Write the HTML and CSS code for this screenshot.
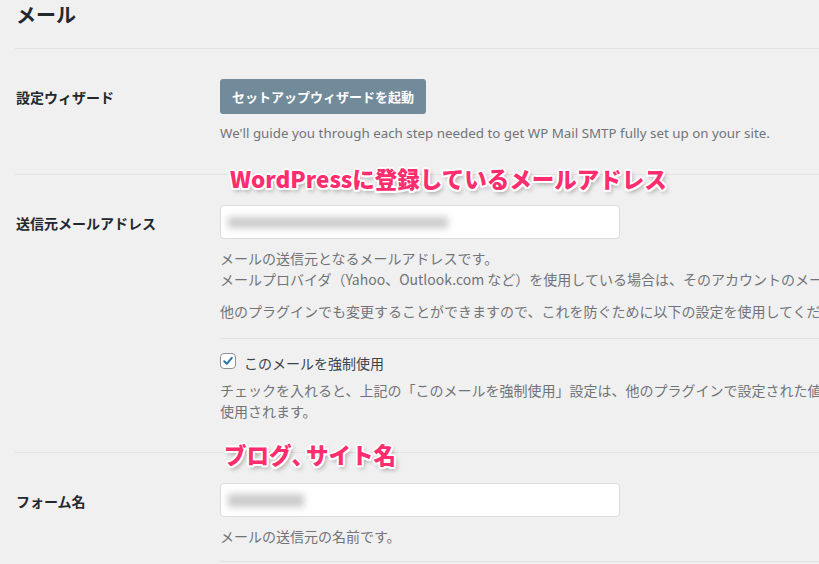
FILE: index.html
```html
<!DOCTYPE html>
<html lang="ja">
<head>
<meta charset="utf-8">
<title>メール</title>
<link rel="stylesheet" href="styles.css">
</head>
<body>
<div class="page">
  <h1 class="title">メール</h1>

  <div class="row">
    <div class="label">設定ウィザード</div>
    <div class="field">
      <button class="btn">セットアップウィザードを起動</button>
      <p class="desc en">We'll guide you through each step needed to get WP Mail SMTP fully set up on your site.</p>
    </div>
  </div>

  <div class="row">
    <div class="label">送信元メールアドレス</div>
    <div class="field">
      <div class="input"><span class="blur blur-email"></span></div>
      <p class="desc first">メールの送信元となるメールアドレスです。<br>メールプロバイダ（Yahoo、Outlook.com など）を使用している場合は、そのアカウントのメールアドレスにする必要があります。</p>
      <p class="desc second">他のプラグインでも変更することができますので、これを防ぐために以下の設定を使用してください。</p>
      <div class="sub">
        <label class="check">
          <span class="box"><svg viewBox="0 0 16 16" width="16" height="16"><path d="M3.6 8.2 L6.6 11.2 L12.4 4.4" fill="none" stroke="#2271b1" stroke-width="2.2" stroke-linecap="round" stroke-linejoin="round"/></svg></span>
          <span class="check-text">このメールを強制使用</span>
        </label>
        <p class="desc note">チェックを入れると、上記の「このメールを強制使用」設定は、他のプラグインで設定された値に関係なく、すべての送信メールに<br>使用されます。</p>
      </div>
    </div>
  </div>

  <div class="row">
    <div class="label">フォーム名</div>
    <div class="field">
      <div class="input"><span class="blur blur-name"></span></div>
      <p class="desc first">メールの送信元の名前です。</p>
      <div class="sub last"></div>
    </div>
  </div>

  <div class="note-label note-email">WordPressに登録しているメールアドレス</div>
  <div class="note-label note-name">ブログ<span class="comma">、</span>サイト名</div>
</div>
</body>
</html>
```

FILE: styles.css
```css
html, body {
  margin: 0;
  padding: 0;
  background: #f0f0f0;
  overflow: hidden;
}

.page {
  position: relative;
  width: 819px;
  height: 564px;
  overflow: hidden;
  padding-left: 15px;
  box-sizing: border-box;
  font-family: "Noto Sans CJK JP", sans-serif;
  color: #23282d;
}

.title {
  margin: 0;
  padding: 0 0 0 1px;
  height: 48px;
  line-height: 30px;
  font-size: 20px;
  font-weight: 700;
  color: #23282d;
}

.row {
  display: flex;
  border-top: 1px solid #e2e2e2;
  padding: 30px 0;
  width: 1200px;
}

.label {
  width: 205px;
  flex: none;
  height: 35px;
  display: flex;
  align-items: center;
  padding-left: 1px;
  box-sizing: border-box;
  font-size: 14px;
  font-weight: 700;
  color: #23282d;
}

.field {
  flex: 1;
}

.btn {
  display: block;
  height: 35px;
  padding: 0 12px;
  border: 0;
  border-radius: 3px;
  background: #718b9b;
  color: #fff;
  font-family: "Noto Sans CJK JP", sans-serif;
  font-size: 13px;
  font-weight: 700;
}

.desc {
  margin: 0;
  font-size: 14px;
  line-height: 21px;
  color: #707478;
  white-space: nowrap;
}

.desc.en {
  margin-top: 9px;
  font-family: "Noto Sans", sans-serif;
  font-size: 13.35px;
}

.input {
  width: 400px;
  height: 34px;
  box-sizing: border-box;
  background: #fff;
  border: 1px solid #dcdcde;
  border-radius: 4px;
  display: flex;
  align-items: center;
  padding-left: 7px;
}

.blur {
  display: block;
  height: 11px;
  background: #cacaca;
  filter: blur(3.5px);
}

.blur-email { width: 220px; }
.blur-name { width: 76px; height: 13px; }

.desc.first { margin-top: 9px; }
.desc.second { margin-top: 11px; }

.sub {
  border-top: 1px solid #e2e2e2;
  margin-top: 16px;
  padding-top: 13px;
  width: 900px;
}

.sub.last {
  margin-top: 14px;
  padding-top: 0;
  height: 10px;
}

.check {
  display: flex;
  align-items: center;
  height: 21px;
}

.box {
  width: 16px;
  height: 16px;
  box-sizing: border-box;
  border: 1px solid #8c8f94;
  border-radius: 4px;
  background: #fff;
  display: flex;
  align-items: center;
  justify-content: center;
  margin-top: -3px;
}

.box svg {
  width: 14px;
  height: 14px;
}

.check-text {
  margin-left: 8px;
  font-size: 14px;
  color: #3c434a;
}

.desc.note { margin-top: 7px; }

.note-label {
  position: absolute;
  font-size: 22.5px;
  font-weight: 900;
  color: #ff2d6e;
  line-height: 28px;
  white-space: nowrap;
  text-shadow:
    -2px 0 0 #fff, 2px 0 0 #fff, 0 -2px 0 #fff, 0 2px 0 #fff,
    -1.5px -1.5px 0 #fff, 1.5px 1.5px 0 #fff, -1.5px 1.5px 0 #fff, 1.5px -1.5px 0 #fff,
    2px 3px 5px rgba(0, 0, 0, 0.4);
}

.note-label .comma {
  letter-spacing: -8px;
}

.note-email { left: 230px; top: 164px; }
.note-name { left: 224px; top: 440px; }
```
